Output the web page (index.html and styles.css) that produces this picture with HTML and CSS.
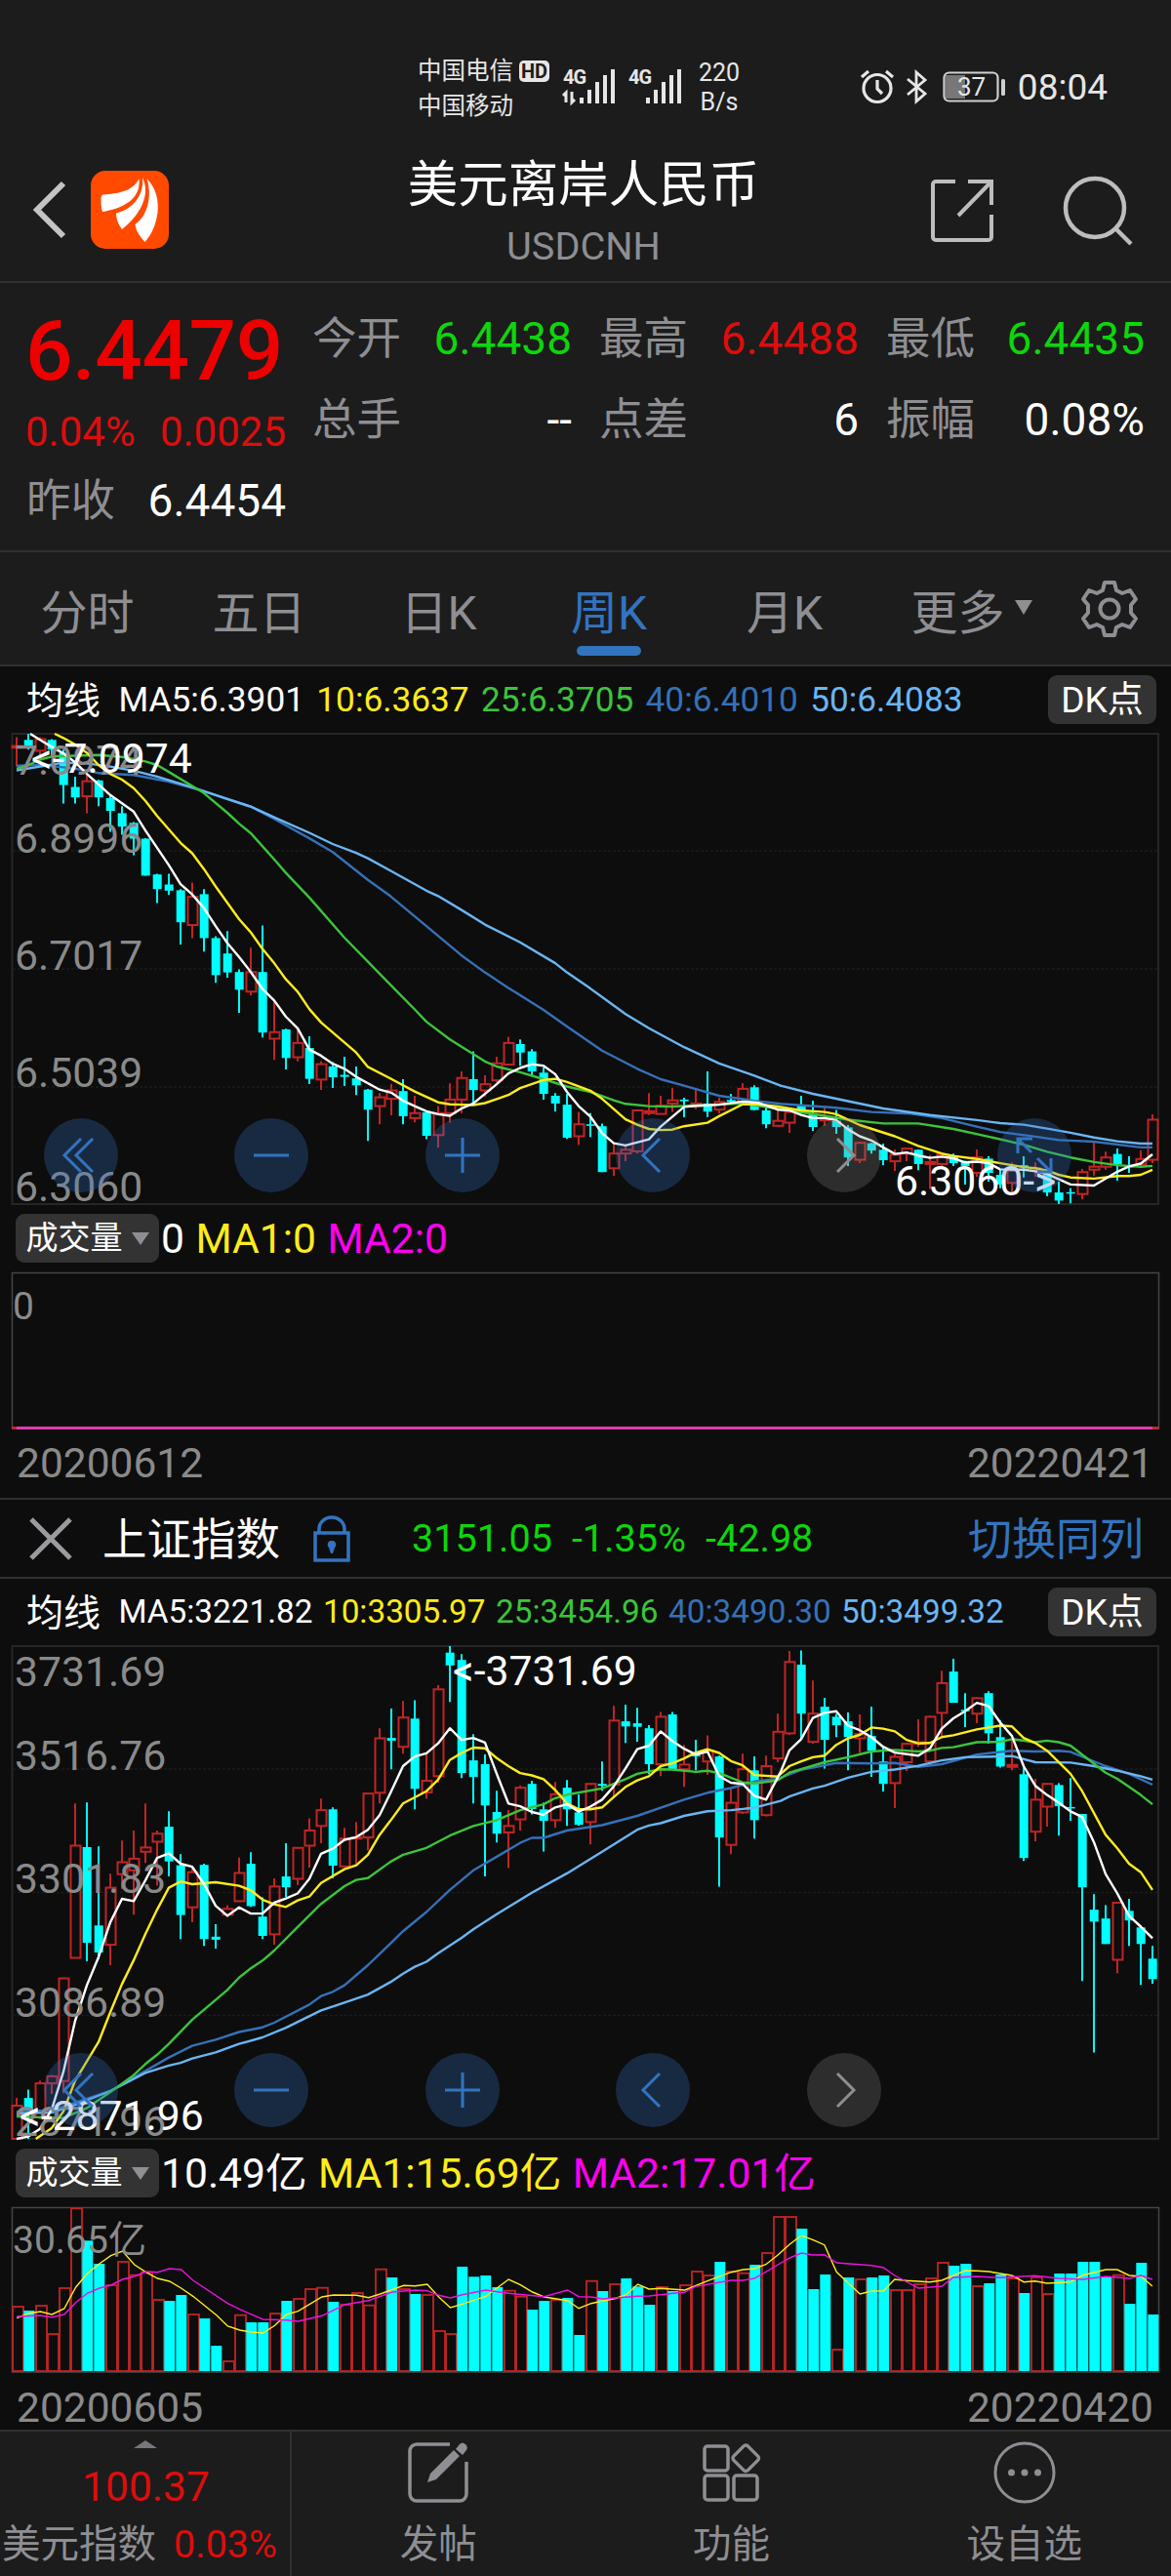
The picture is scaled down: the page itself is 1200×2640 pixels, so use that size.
FILE: index.html
```html
<!DOCTYPE html>
<html lang="zh-CN">
<head>
<meta charset="utf-8">
<title>美元离岸人民币 USDCNH</title>
<link rel="stylesheet" href="styles.css">
</head>
<body>
<header class="top">
  <div class="status">
    <div class="carriers"><span>中国电信<b class="hd">HD</b></span><span>中国移动</span></div>
    <svg class="signals" width="124" height="40" viewBox="0 0 124 40" fill="#e6e6e6">
      <text x="1" y="17" class="net">4G</text>
      <path d="M4 36V26l-3 3M10 25v11l3-3" fill="none" stroke="#e6e6e6" stroke-width="3"/>
      <path d="M18 31h4v6h-4zM26 23h4v14h-4zM34 15h4v22h-4zM42 8h4v29h-4zM50 2h4v35h-4z"/>
      <text x="68" y="17" class="net">4G</text>
      <path d="M86 31h4v6h-4zM94 23h4v14h-4zM102 15h4v22h-4zM110 8h4v29h-4zM118 2h4v35h-4z"/>
    </svg>
    <div class="speed"><span>220</span><span>B/s</span></div>
    <div class="sys">
      <svg width="36" height="38" viewBox="0 0 36 38" fill="none" stroke="#e6e6e6" stroke-width="3.2"><circle cx="18" cy="20.500" r="14"/><path d="M18 12v9l5 5M2 9l7-6M34 9l-7-6"/></svg>
      <svg width="24" height="38" viewBox="0 0 24 38" fill="none" stroke="#e6e6e6" stroke-width="2.800"><path d="M2 11l18 15-9 8V4l9 8L2 27"/></svg>
      <svg width="66" height="34" viewBox="0 0 66 34"><rect x="3" y="5" width="20" height="24" fill="#777"/><rect x="1.500" y="2.500" width="55" height="29" rx="5" fill="none" stroke="#cfcfcf" stroke-width="2.200"/><rect x="60" y="9" width="4" height="17" rx="1.500" fill="#cfcfcf"/><text x="29.500" y="26" text-anchor="middle" class="batt">37</text></svg>
      <span class="clock">08:04</span>
    </div>
  </div>
  <div class="titlebar">
    <svg class="back" width="40" height="64" viewBox="0 0 40 64" fill="none" stroke="#c4c4c4" stroke-width="6"><path d="M35 5L8 32l27 27"/></svg>
    <svg class="logo" width="80" height="80" viewBox="0 0 80 80"><rect width="80" height="80" rx="15" fill="#ff4a00"/><path fill="#fff" d="M49.500 8C43 21 30 23 13 24.500q-2.500.5-2.500 4c0 5 0 9 1.500 13.500C30 39 52 31 49.500 8z"/><path fill="#fff" d="M53 7c2 20-12 33-27 36.500 0 6 2 11 6 16.500C50 46 62 25 53 7z"/><path fill="#fff" d="M57.500 8c6 19 0 39-12 47 1 7 4 11 10 18C68 60 77 28 57.500 8z"/></svg>
    <div class="names"><h1>美元离岸人民币</h1><p>USDCNH</p></div>
    <svg class="share" width="68" height="68" viewBox="0 0 68 68" fill="none" stroke="#bdbdbd" stroke-width="4"><path d="M27 4H7a3 3 0 0 0-3 3v54a3 3 0 0 0 3 3h54a3 3 0 0 0 3-3V38"/><path d="M40 4h24v24M64 4L30 39"/></svg>
    <svg class="search" width="72" height="72" viewBox="0 0 72 72" fill="none" stroke="#bdbdbd" stroke-width="4.500"><circle cx="33" cy="33" r="30"/><path d="M54 54l16 16"/></svg>
  </div>
</header>

<section class="quote">
  <div class="last"><strong>6.4479</strong><p><span>0.04%</span><span>0.0025</span></p></div>
  <dl class="stats">
    <div><dt>今开</dt><dd class="dn">6.4438</dd></div>
    <div><dt>最高</dt><dd class="up">6.4488</dd></div>
    <div><dt>最低</dt><dd class="dn">6.4435</dd></div>
    <div><dt>总手</dt><dd>--</dd></div>
    <div><dt>点差</dt><dd>6</dd></div>
    <div><dt>振幅</dt><dd>0.08%</dd></div>
  </dl>
  <dl class="prev"><dt>昨收</dt><dd>6.4454</dd></dl>
</section>

<nav class="tabs">
  <a>分时</a><a>五日</a><a>日K</a><a class="active">周K</a><a>月K</a><a class="more">更多<i></i></a>
  <a class="gear"><svg width="60" height="60" viewBox="0 0 60 60" fill="none" stroke="#8e8e93" stroke-width="4" stroke-linejoin="round"><path d="M25 3h10l2 8 6 3 8-3 6 9-5 6v8l5 6-6 9-8-3-6 3-2 8H25l-2-8-6-3-8 3-6-9 5-6v-8l-5-6 6-9 8 3 6-3z"/><circle cx="30" cy="30" r="9.500"/></svg></a>
</nav>

<main>
  <div class="ma ma-fx"><b>均线</b><span class="c5">MA5:6.3901</span><span class="c10">10:6.3637</span><span class="c25">25:6.3705</span><span class="c40">40:6.4010</span><span class="c50">50:6.4083</span><button>DK点</button></div>
  <svg id="fx" class="chart" width="1200" height="484"></svg>
  <div class="vol-head"><button>成交量<i></i></button><span class="c5">0</span><span class="c10">MA1:0</span><span class="cm">MA2:0</span></div>
  <svg class="chart" width="1200" height="162" viewBox="0 0 1200 162"><path d="M12.500 161V1.500h1175V161" class="vframe"/><path d="M12 160.500h1176" stroke="#b92b2b" stroke-width="3"/><path d="M17 160.500h1164" stroke="#e23ab0" stroke-width="3"/><text x="13" y="49" class="vlabel">0</text></svg>
  <div class="dates"><span>20200612</span><span>20220421</span></div>

  <div class="index">
    <svg width="44" height="44" viewBox="0 0 44 44" stroke="#9a9a9f" stroke-width="5"><path d="M2 2l40 40M42 2L2 42"/></svg>
    <h2>上证指数</h2>
    <svg class="lock" width="38" height="48" viewBox="0 0 38 48" fill="none" stroke="#3274c0" stroke-width="3.500"><path d="M2 18h34v28H2zM6 18v-4a13 12 0 0 1 26 0v4"/><path d="M19 26a4 4 0 0 1 3 7l-2 6h-2l-2-6a4 4 0 0 1 3-7z" fill="#3274c0" stroke="none"/></svg>
    <p class="dn"><span>3151.05</span><span>-1.35%</span><span>-42.98</span></p>
    <a>切换同列</a>
  </div>

  <div class="ma ma-sh"><b>均线</b><span class="c5">MA5:3221.82</span><span class="c10">10:3305.97</span><span class="c25">25:3454.96</span><span class="c40">40:3490.30</span><span class="c50">50:3499.32</span><button>DK点</button></div>
  <svg id="sh" class="chart" width="1200" height="507"></svg>
  <div class="vol-head"><button>成交量<i></i></button><span class="c5">10.49亿</span><span class="c10">MA1:15.69亿</span><span class="cm">MA2:17.01亿</span></div>
  <svg id="shvol" class="chart" width="1200" height="171"></svg>
  <div class="dates short"><span>20200605</span><span>20220420</span></div>
</main>

<footer class="bottom">
  <div class="dxy"><i></i><strong>100.37</strong><p><span>美元指数</span><em>0.03%</em></p></div>
  <a><svg width="64" height="64" viewBox="0 0 64 64" fill="none" stroke="#8e8e93" stroke-width="3.500"><path d="M44 3H10a7 7 0 0 0-7 7v44a7 7 0 0 0 7 7h44a7 7 0 0 0 7-7V21"/><path d="M21 42l3-9 24-24 6 6-24 24z" fill="#8e8e93" stroke="none"/><path d="M50 8l4-5q3-3 6 0t1 6l-4 5z" fill="#8e8e93" stroke="none"/></svg><span>发帖</span></a>
  <a><svg width="64" height="64" viewBox="0 0 64 64" fill="none" stroke="#8e8e93" stroke-width="3.500"><rect x="5" y="5" width="24" height="25" rx="3"/><rect x="5" y="35" width="24" height="25" rx="3"/><rect x="35" y="35" width="24" height="25" rx="3"/><rect x="37" y="7" width="20.500" height="20.500" rx="3" transform="rotate(45 47.250 17.250)"/></svg><span>功能</span></a>
  <a><svg width="64" height="64" viewBox="0 0 64 64" fill="none" stroke="#8e8e93" stroke-width="3"><circle cx="32" cy="32" r="30"/><g fill="#8e8e93" stroke="none"><circle cx="18.500" cy="32" r="3.500"/><circle cx="32" cy="32" r="3.500"/><circle cx="45.500" cy="32" r="3.500"/></g></svg><span>设自选</span></a>
</footer>
<script src="charts.js"></script>
</body>
</html>
```
FILE: styles.css
```css
* { box-sizing: border-box; margin: 0; padding: 0; }
body {
  width: 1200px; height: 2640px; overflow: hidden;
  display: flex; flex-direction: column;
  background: #0d0d0d; color: #fff;
  font-family: Roboto, "Noto Sans CJK SC", sans-serif;
}
svg { display: block; flex: none; overflow: visible; }
i, em { font-style: normal; }
button { border: 0; font: inherit; color: inherit; background: #333; border-radius: 9px; }
.up { color: #dd0d0d; }
.dn, .stats .dn { color: #0cd60c; }
.c5 { color: #fff; } .c10 { color: #ffec1c; } .c25 { color: #3cc43c; }
.c40 { color: #3571b8; } .c50 { color: #6ab6f5; } .cm { color: #ff00f0; }

.top { height: 290px; background: #1c1c1c; border-bottom: 2px solid #303032; flex: none; }
.status { height: 142px; padding: 55px 65px 0 428px; display: flex; color: #e6e6e6; }
.carriers { display: flex; flex-direction: column; font-size: 24.5px; width: 148px; }
.carriers span { display: flex; align-items: center; height: 36px; line-height: 36px; }
.hd { background: #e6e6e6; color: #1c1c1c; font-size: 20px; line-height: 22px; border-radius: 5px; padding: 0 2px; margin-left: 6px; }
.signals { margin-top: 14px; }
.net { font-size: 20px; font-weight: 700; letter-spacing: -1px; }
.speed { margin-left: 11px; width: 52px; text-align: center; display: flex; flex-direction: column; font-size: 25px; line-height: 30px; margin-top: 5px; }
.sys { margin-left: auto; display: flex; align-items: center; height: 68px; gap: 11px; }
.sys svg:nth-child(2) { margin-right: 3px; }
.batt { font-size: 26px; fill: #e6e6e6; }
.clock { font-size: 37px; }
.titlebar { display: flex; align-items: flex-start; padding-left: 30px; }
.back { margin-top: 41px; }
.logo { margin: 33px 0 0 23px; }
.names { width: 600px; margin-left: 125px; text-align: center; }
.names h1 { font-size: 51.500px; font-weight: 400; line-height: 76px; margin-top: 10px; }
.names p { font-size: 39.700px; line-height: 46px; color: #8e8e93; margin-top: 2px; }
.share { margin: 40px 0 0 54px; }
.search { margin: 38px 0 0 69px; }

.quote { height: 276px; flex: none; background: #1c1c1c; border-bottom: 2px solid #303032; display: grid; grid-template-columns: 293px 853px; grid-template-rows: 181px 83px; column-gap: 27px; }
.last { padding: 23px 0 0 26px; color: #ee0000; }
.last strong { display: block; font-weight: 500; font-size: 85.500px; line-height: 94px; letter-spacing: -.5px; }
.last p { display: flex; justify-content: space-between; font-size: 42px; line-height: 50px; margin-top: 11px; color: #dd0d0d; }
.stats { display: grid; grid-template-columns: 266px 266px 265px; column-gap: 28px; grid-auto-rows: 83px; padding-top: 15px; }
.stats div, .prev { display: flex; justify-content: space-between; align-items: center; }
dt { color: #8e8e93; font-size: 45.500px; line-height: 56px; margin-top: 3px; }
dd { font-size: 46px; line-height: 56px; }
.prev { padding-left: 27px; }

.tabs { height: 117px; flex: none; background: #1c1c1c; border-bottom: 2px solid #303032; display: flex; color: #8e8e93; font-size: 48px; }
.tabs a { width: 179px; display: flex; justify-content: center; align-items: center; height: 116px; }
.tabs a:nth-child(2) { width: 173px; }
.tabs a:nth-child(3) { width: 195px; }
.tabs a:nth-child(5) { width: 206px; }
.tabs .active { color: #3274c0; position: relative; width: 154px; }
.tabs .active::after { content: ""; position: absolute; left: 44px; top: 96px; width: 66px; height: 10px; border-radius: 5px; background: #3274c0; }
.tabs .more { width: 177px; }
.tabs .more i { border: 9px solid transparent; border-top: 15px solid #8e8e93; border-bottom: 0; margin: 0 0 4px 10px; }
.tabs .gear { width: 105px; }

main { display: block; flex: none; }
.ma { height: 68px; display: flex; align-items: center; padding: 0 15px 0 27px; line-height: 50px; }
.ma b { font-size: 38px; font-weight: 400; width: 94.500px; padding-top: 1px; }
.ma-fx { font-size: 35.200px; } .ma-fx span { margin-right: 12.400px; }
.ma-sh { font-size: 33.300px; } .ma-sh span { margin-right: 10.500px; }
.ma button { margin-left: auto; width: 111px; height: 50px; font-size: 37px; line-height: 51px; }
.vol-head { height: 68px; display: flex; align-items: center; padding-left: 16px; font-size: 42.600px; line-height: 50px; }
.vol-head button { width: 147px; height: 50px; font-size: 33px; line-height: 52px; display: flex; align-items: center; justify-content: center; margin-right: 2px; }
.vol-head button i { border: 9px solid transparent; border-top: 13px solid #8e8e93; border-bottom: 0; margin-left: 9px; }
.vol-head span { margin-right: 11.500px; }
.chart text { font-size: 42.700px; }
.axis { fill: #8a8a8a; }
.mark { fill: #fff; }
.chart .vlabel { font-size: 39px; fill: #8a8a8a; }
.vframe { fill: none; stroke: #454545; stroke-width: 1.500; }
.dates { height: 70px; line-height: 69px; display: flex; justify-content: space-between; padding: 0 18px 0 17px; font-size: 42.500px; color: #8a8a8a; }
.dates.short { height: 58px; line-height: 71px; }
.index { height: 83px; border-top: 2px solid #303032; border-bottom: 2px solid #303032; display: flex; align-items: center; padding: 0 28px 0 30px; line-height: 56px; }
.index h2 { font-size: 45.500px; font-weight: 400; margin: 4px 0 0 31px; }
.index .lock { margin-left: 34px; }
.index p { display: flex; gap: 20px; font-size: 39.600px; margin: 1px 0 0 63px; }
.index a { margin: 4px 0 0 auto; font-size: 45px; color: #3274c0; }

.bottom { height: 150px; flex: none; display: flex; background: #1c1c1c; border-top: 2px solid #303032; }
.bottom > a { flex: 1; display: flex; flex-direction: column; align-items: center; font-size: 39.500px; line-height: 60px; color: #8e8e93; padding-top: 10px; }
.bottom > a span { margin-top: 12px; }
.dxy { width: 299px; border-right: 2px solid #303032; display: flex; flex-direction: column; align-items: center; }
.dxy i { border: 12px solid transparent; border-bottom: 8px solid #77777b; border-top: 0; margin-top: 9px; }
.dxy strong { font-size: 42.500px; font-weight: 400; color: #dd0d0d; line-height: 50px; margin: 15px 0 0 2px; }
.dxy p { display: flex; justify-content: space-between; align-items: center; align-self: stretch; padding: 0 13px 0 2px; font-size: 39.500px; line-height: 60px; color: #8e8e93; margin-top: 4px; white-space: nowrap; }
.dxy em { color: #dd0d0d; }
```
FILE: charts.js
```js
const RED = '#c22424', CYAN = '#00ffff';
const COLORS = ['#3571b8', '#6ab6f5', '#3cc43c', '#ffec1c', '#ffffff'];

// Each candle: direction, high, body top, body bottom, low (on the series' own grid).
const fx = {
  id: 'fx', top: 181, bottom: 1401, y0: 1, h: 482, grid: [121, 242, 363],
  candles: `u190,213,217,266 d181,197,211,222 u190,195,225,240 d195,197,222,240 d222,230,314,362 d292,319,346,362 u280,304,343,387 d300,302,346,369 d343,348,381,435 d369,387,422,443 d410,412,453,496 d452,453,549,549 d544,546,584,620 d544,572,588,599 d584,587,670,728 u567,604,677,711 d584,597,711,746 d706,711,807,827 d693,751,800,814 d792,799,845,905 u736,799,850,860 d678,799,956,969 u870,955,972,1027 d946,948,1022,1052 u948,983,1020,1031 d966,996,1076,1090 u1030,1038,1078,1105 d1033,1044,1072,1100 d1019,1066,1071,1095 d1044,1075,1093,1118 d1102,1104,1156,1237 u1113,1124,1147,1194 u1090,1106,1128,1171 d1077,1108,1173,1194 u1120,1165,1178,1189 d1162,1163,1224,1233 u1147,1165,1222,1254 u1088,1130,1165,1190 u1057,1074,1130,1165 d1005,1077,1105,1140 u1067,1090,1106,1122 u1019,1036,1080,1085 u967,983,1039,1039 d974,986,1008,1042 d999,1005,1057,1067 d1047,1060,1115,1130 d1113,1120,1140,1161 d1115,1143,1229,1232 u1162,1194,1225,1248 d1165,1194,1198,1227 d1192,1199,1318,1318 u1243,1270,1308,1328 u1250,1260,1270,1290 u1158,1158,1264,1270 u1113,1160,1165,1170 u1120,1146,1167,1167 u1100,1132,1140,1162 d1125,1130,1134,1176 u1105,1140,1147,1155 d1057,1140,1161,1175 u1125,1136,1156,1166 d1115,1131,1136,1140 u1087,1102,1135,1138 d1093,1098,1157,1158 d1150,1158,1194,1204 u1150,1185,1198,1200 u1160,1162,1190,1216 d1120,1145,1160,1165 d1133,1165,1201,1211 u1150,1180,1184,1198 d1157,1185,1201,1219 d1196,1202,1280,1302 u1240,1242,1286,1295 d1242,1243,1262,1270 d1244,1260,1287,1300 u1259,1273,1290,1315 u1255,1257,1270,1290 d1259,1260,1297,1313 u1274,1292,1297,1362 u1268,1272,1297,1302 d1270,1278,1295,1302 d1288,1290,1302,1350 u1259,1280,1320,1330 d1277,1283,1320,1343 d1310,1325,1350,1360 u1293,1315,1346,1370 d1277,1300,1305,1332 u1293,1308,1314,1330 d1310,1318,1371,1381 d1343,1371,1392,1401 d1360,1370,1374,1399 u1310,1318,1375,1388 u1241,1304,1312,1327 u1265,1280,1304,1312 d1257,1271,1298,1340 d1277,1302,1306,1320 u1262,1284,1298,1305 u1168,1182,1286,1295`,
  lines: [
    '51,264 123,262 195,268 267,276 303,283 411,288 519,305 627,330 771,370 843,402 951,452 1023,488 1131,560 1200,602 1311,680 1419,756 1491,800 1563,840 1671,897 1743,940 1851,1003 1959,1050 2031,1077 2103,1094 2211,1120 2319,1133 2400,1141 2571,1151 2679,1162 2800,1166 2895,1178 3003,1200 3075,1214 3183,1226 3255,1235 3363,1239 3507,1254 3543,1254',
    '51,276 123,266 195,256 267,258 339,266 411,277 483,292 591,320 699,350 771,370 843,398 951,438 1023,467 1095,490 1131,504 1200,536 1311,588 1347,602 1419,638 1491,676 1599,722 1707,776 1743,800 1815,842 1923,908 1995,945 2103,994 2211,1036 2319,1068 2400,1094 2499,1115 2607,1134 2715,1153 2859,1170 3003,1183 3075,1191 3147,1195 3219,1205 3291,1216 3363,1228 3435,1238 3507,1244 3543,1244',
    '51,272 87,262 123,248 159,240 231,238 303,236 375,241 447,253 483,262 519,280 627,335 699,386 735,414 771,439 843,507 879,542 951,606 1059,710 1200,832 1275,896 1311,928 1383,974 1455,1012 1491,1031 1527,1044 1599,1059 1671,1077 1743,1096 1815,1110 1887,1132 1923,1141 1995,1147 2067,1148 2283,1140 2427,1158 2535,1172 2607,1182 2715,1192 2823,1192 2931,1206 3039,1226 3147,1247 3219,1265 3291,1280 3363,1292 3435,1300 3507,1304 3543,1302',
    '168,181 195,192 231,209 267,230 303,262 339,285 375,300 411,322 447,355 483,394 555,464 591,491 627,532 663,577 735,662 771,696 807,739 843,776 879,818 915,850 951,895 987,930 1095,1008 1131,1045 1200,1075 1275,1109 1347,1137 1383,1142 1419,1143 1455,1144 1491,1139 1563,1118 1599,1100 1671,1079 1707,1076 1743,1084 1815,1107 1851,1128 1923,1181 1959,1195 1995,1206 2031,1209 2067,1208 2103,1199 2175,1190 2211,1173 2283,1142 2331,1142 2391,1148 2463,1158 2535,1162 2571,1168 2643,1196 2751,1225 2823,1250 2895,1270 2931,1276 3003,1284 3075,1295 3147,1305 3183,1308 3219,1314 3255,1325 3291,1332 3363,1335 3435,1328 3471,1328 3507,1325 3543,1312',
    '93,181 123,197 159,215 195,232 231,255 267,285 303,312 339,340 411,383 447,432 519,522 555,571 591,598 627,633 663,680 699,724 735,760 771,799 807,843 843,873 879,915 915,945 951,1000 987,1016 1023,1037 1059,1050 1095,1071 1167,1104 1203,1112 1239,1133 1275,1147 1311,1160 1347,1168 1383,1172 1419,1153 1455,1140 1527,1090 1563,1062 1599,1048 1635,1038 1671,1042 1707,1064 1743,1110 1779,1147 1815,1174 1851,1217 1887,1243 1923,1249 1995,1233 2031,1200 2103,1149 2140,1146 2211,1143 2283,1135 2331,1138 2391,1156 2427,1158 2463,1170 2499,1178 2535,1178 2571,1183 2607,1207 2643,1225 2679,1236 2715,1254 2751,1271 2787,1267 2823,1275 2859,1281 2895,1278 2931,1282 2967,1293 3003,1291 3039,1295 3075,1311 3147,1312 3183,1316 3219,1323 3291,1350 3363,1353 3435,1317 3471,1303 3507,1296 3543,1272'
  ],
  axis: [['7.0974', 43], ['6.8996', 123], ['6.7017', 243], ['6.5039', 363], ['6.3060', 480]],
  marks: [['&lt;-7.0974', 32, 41], ['6.3060-&gt;', 917, 474]],
  buttonsY: 433, expand: true
};

const sh = {
  id: 'sh', top: 169, bottom: 1446, y0: 1, h: 505, grid: [127, 253.5, 379.5],
  candles: `u1340,1360,1446,1446 d1318,1340,1372,1446 u1295,1302,1390,1395 u1280,1284,1302,1330 u1030,1030,1296,1328 u577,686,977,977 d574,690,938,986 d688,893,963,980 u759,795,943,996 u673,729,760,798 u647,720,750,865 u577,691,702,731 u647,655,676,790 d597,637,727,766 d708,737,866,928 u740,755,846,885 d733,736,928,946 d890,922,930,953 u840,850,865,870 u717,757,830,830 d703,733,843,845 d820,870,920,928 u771,792,916,943 d680,766,794,819 u692,692,772,788 u615,647,686,743 u564,594,635,680 d587,592,738,771 u640,668,740,742 u625,665,668,735 u551,551,665,698 u382,408,549,577 d331,407,414,488 u311,354,430,448 d309,357,539,592 u450,518,548,564 u270,281,506,523 d169,186,219,314 d190,205,498,511 d397,465,508,577 d450,475,582,766 d544,599,655,678 u594,635,652,744 u530,536,618,647 d518,526,591,605 d575,592,622,701 u521,553,620,640 d516,536,592,635 d553,600,632,634 u525,526,625,683 d468,526,531,544 u324,362,528,560 d321,364,377,420 d329,369,378,417 d374,382,475,501 u340,352,475,506 d340,346,488,490 u425,476,488,534 d412,450,455,491 u400,441,468,503 d453,455,665,792 u540,575,684,708 u448,488,600,604 d455,491,620,668 u453,480,607,610 u344,391,460,470 u182,210,395,399 d180,217,344,410 u258,344,417,422 d303,326,412,486 d345,352,374,405 d341,364,405,491 u346,397,408,446 d326,402,440,508 d430,468,526,546 u448,456,524,589 u420,422,470,493 u359,418,422,430 u349,352,468,468 u233,265,342,402 d202,235,316,316 d291,334,336,379 u301,304,344,369 d286,291,395,422 d362,405,481,484 u410,477,482,491 d480,501,718,726 u513,567,650,675 u524,526,585,637 d524,529,584,660 d511,586,589,622 d604,604,794,1037 d812,852,883,1222 d840,875,941,941 u832,834,982,1017 d824,855,880,946 d895,898,941,1047 d946,979,1032,1044`,
  lines: [
    '51,1376 159,1372 231,1352 339,1322 447,1270 519,1235 591,1205 663,1189 735,1169 807,1157 843,1145 951,1098 987,1076 1023,1065 1059,1048 1131,996 1200,940 1239,908 1311,858 1383,801 1455,750 1527,715 1599,679 1635,666 1671,666 1743,647 1851,633 1959,609 2103,567 2175,549 2247,537 2319,520 2391,513 2463,490 2571,472 2679,473 2751,472 2823,482 2895,475 3003,450 3111,440 3183,442 3255,440 3291,443 3399,480 3471,500 3543,528',
    '51,1380 159,1378 231,1358 339,1322 447,1275 519,1256 555,1249 591,1238 663,1222 735,1200 807,1183 879,1158 987,1113 1059,1093 1131,1072 1200,1040 1239,1018 1275,1000 1311,987 1347,965 1419,925 1455,903 1527,864 1635,808 1743,758 1851,702 1959,645 1995,634 2031,628 2103,609 2175,597 2247,594 2319,588 2400,570 2427,559 2499,538 2535,531 2607,510 2679,495 2751,489 2823,479 2895,465 2967,457 3111,454 3183,470 3291,471 3363,480 3435,492 3507,506 3543,515',
    '51,1388 123,1390 195,1392 267,1366 339,1325 411,1281 447,1252 483,1228 519,1200 591,1137 699,1060 735,1028 771,1004 807,984 843,958 915,897 987,837 1059,791 1095,775 1131,770 1200,728 1239,710 1311,692 1383,660 1455,635 1527,620 1599,594 1671,579 1707,563 1743,554 1851,538 1923,514 1959,500 2031,488 2067,489 2139,495 2175,492 2211,498 2283,522 2319,525 2391,517 2427,497 2535,470 2607,457 2679,442 2751,438 2823,442 2859,440 2895,433 2931,431 3003,418 3075,417 3111,410 3183,418 3219,414 3255,418 3291,427 3399,497 3435,513 3507,555 3543,579',
    '110,1446 159,1418 195,1375 231,1295 303,1195 339,1118 375,1045 411,983 447,915 483,852 519,795 555,779 591,786 663,781 735,790 771,802 807,826 843,838 879,845 915,828 951,818 987,783 1059,747 1095,737 1131,710 1167,658 1200,622 1239,577 1311,545 1347,515 1383,464 1419,446 1455,432 1491,434 1527,459 1563,480 1599,498 1635,504 1671,514 1707,542 1743,576 1779,592 1815,592 1851,587 1887,560 1923,534 1959,517 1995,506 2031,480 2067,473 2103,460 2139,445 2175,436 2211,446 2247,467 2283,478 2319,503 2391,507 2427,480 2463,468 2499,457 2535,453 2571,425 2607,408 2643,399 2679,380 2715,383 2751,390 2787,412 2823,421 2859,420 2895,405 2931,400 3003,385 3075,375 3111,377 3147,407 3183,420 3219,440 3291,500 3327,545 3399,658 3435,693 3471,733 3507,755 3543,801',
    '51,1446 87,1440 123,1420 159,1370 195,1272 231,1140 267,1048 303,975 339,885 375,824 411,830 447,776 483,718 519,706 555,733 591,741 627,785 663,842 699,868 735,846 771,862 807,862 843,834 879,823 915,810 951,772 987,707 1023,694 1059,671 1095,664 1131,645 1167,607 1200,550 1239,480 1275,455 1311,447 1347,421 1383,382 1419,412 1455,407 1491,419 1527,500 1563,577 1599,584 1635,599 1671,606 1707,587 1743,579 1779,598 1815,585 1851,567 1887,532 1923,486 1959,436 1995,427 2031,390 2067,415 2103,435 2139,450 2175,442 2211,506 2247,523 2283,526 2319,557 2355,567 2400,495 2427,439 2463,410 2499,355 2535,342 2571,338 2607,375 2643,387 2679,405 2715,430 2751,445 2823,453 2859,434 2895,383 2931,356 2967,338 3003,316 3039,324 3075,367 3111,402 3147,480 3183,531 3219,555 3255,575 3291,597 3327,612 3363,677 3399,760 3435,810 3471,868 3507,896 3543,926'
  ],
  axis: [['3731.69', 42], ['3516.76', 127.500], ['3301.83', 253.500], ['3086.89', 381], ['2871.96', 503]],
  marks: [['&lt;-3731.69', 464, 40.500], ['&lt;-2871.96', 20, 497]],
  buttonsY: 456
};

function drawCandles(c) {
  const Y = v => +(c.y0 + (v - c.top) * c.h / (c.bottom - c.top)).toFixed(1);
  let s = `<path d="M12.500 ${c.y0}h1174.500v${c.h}H12.500z" fill="none" stroke="#262626" stroke-width="2"/>`;
  for (const g of c.grid) s += `<path d="M13 ${g}H1187" stroke="#1b1b1b" stroke-width="1.500" stroke-dasharray="3 2"/>`;
  c.candles.split(' ').forEach((t, i) => {
    const [hi, a, b, lo] = t.slice(1).split(',').map(v => Y(+v));
    const x = 17 + 12 * i;
    if (t[0] === 'd') {
      s += `<path d="M${x} ${hi}V${lo}" stroke="${CYAN}" stroke-width="2"/><rect x="${x - 4.300}" y="${a}" width="9" height="${Math.max(b - a, 1.500)}" fill="${CYAN}"/>`;
    } else {
      s += `<path d="M${x} ${hi}V${a}M${x} ${b}V${lo}" stroke="${RED}" stroke-width="2"/><rect x="${x - 4.500}" y="${a}" width="10" height="${Math.max(b - a, 1)}" fill="none" stroke="${RED}" stroke-width="2"/>`;
    }
  });
  c.lines.forEach((l, i) => {
    const pts = l.split(' ').map(p => { const [x, y] = p.split(',').map(Number); return (x / 3).toFixed(1) + ',' + Y(y); });
    s += `<polyline points="${pts.join(' ')}" fill="none" stroke="${COLORS[i]}" stroke-width="2.400" stroke-linejoin="round"/>`;
  });
  for (const [t, y] of c.axis) s += `<text x="15" y="${y}" class="axis">${t}</text>`;
  for (const [t, x, y] of c.marks) s += `<text x="${x}" y="${y}" class="mark">${t}</text>`;
  const icons = ['M0-17L-17 0 0 17M12-17L-5 0 12 17', 'M-18 0H18', 'M-18 0H18M0-18V18', 'M7-17L-10 0 7 17', 'M-7-17L10 0-7 17'];
  if (c.expand) icons.push('M-17-2V-17H-2M-17-17L-3-3M17 3V17H3M17 17L3 3');
  icons.forEach((d, i) => {
    const grey = i === 4;
    s += `<g transform="translate(${[83, 278, 474, 669, 865, 1060][i]} ${c.buttonsY})"><circle r="38" fill="${grey ? '#808080' : '#3578cc'}" fill-opacity=".28"/><path d="${d}" fill="none" stroke="${grey ? '#8e8e93' : '#3274c0'}" stroke-width="3"/></g>`;
  });
  document.getElementById(c.id).innerHTML = s;
}
drawCandles(fx);
drawCandles(sh);

// Turnover bars: direction and top edge in thirds of a pixel.
const volume = 'u489 d504 u486 u573 u432 u187 d289 d360 u423 u351 u392 u383 u468 d474 d456 u513 d528 d612 u657 u515 d540 d540 u510 d474 u465 u435 u431 d477 u483 u447 u485 u374 d402 u435 d453 u453 u564 u573 d369 d400 d396 d432 u440 u458 d501 d474 u468 d465 d579 u410 d444 u420 d405 d430 d486 u429 d444 u423 u381 u393 d354 u381 u386 d363 u324 u213 u213 d252 d438 d393 u621 d402 u405 d402 d396 u438 u438 u420 u402 u354 d366 d360 u426 d420 d393 u402 d450 u399 u450 d390 d390 d354 d354 d402 u392 d483 d357 d516';
const volMa = [
  ['#ffec1c', '45,527 76,513 108,507 139,516 172,498 203,432 234,390 266,360 297,335 328,321 360,363 391,386 422,405 454,414 485,435 517,460 580,518 610,552 642,564 673,570 704,573 736,550 767,516 798,506 862,462 893,456 955,457 987,464 1018,453 1081,427 1112,428 1144,423 1175,462 1206,495 1238,484 1301,460 1362,408 1394,425 1426,447 1457,462 1520,473 1550,497 1583,482 1615,474 1646,467 1677,455 1708,423 1738,438 1770,436 1834,441 1896,412 1958,386 1990,378 2020,375 2051,362 2083,333 2115,300 2146,273 2178,287 2208,302 2240,385 2272,420 2303,453 2334,444 2366,443 2396,408 2428,412 2490,416 2522,411 2585,381 2616,382 2648,384 2710,396 2742,416 2772,413 2804,420 2866,416 2900,395 2961,378 2992,378 3024,396 3055,398 3086,429'],
  ['#e812e0', '45,522 108,519 139,524 172,516 203,479 234,451 266,435 297,426 328,408 360,399 391,384 422,386 454,375 485,378 517,411 610,482 642,500 704,531 767,533 798,537 862,520 925,485 987,473 1050,447 1112,441 1144,443 1175,457 1206,465 1238,455 1301,441 1362,451 1457,461 1520,441 1550,461 1583,462 1615,468 1708,460 1738,459 1834,447 1862,430 1958,411 1990,411 2020,405 2051,385 2083,363 2115,342 2146,327 2178,333 2208,332 2240,357 2334,365 2366,372 2396,396 2460,435 2522,429 2553,402 2616,399 2678,403 2772,397 2835,405 2900,408 2961,399 3024,405 3055,396 3086,408']
];
let s = '<path d="M12.500 1.500h1175V170H12.500z" class="vframe"/>';
volume.split(' ').forEach((t, i) => {
  const x = 12 + 12 * i, y = +t.slice(1) / 3 - 61;
  s += t[0] === 'd'
    ? `<rect x="${x + .3}" y="${y.toFixed(1)}" width="11" height="${(169 - y).toFixed(1)}" fill="${CYAN}"/>`
    : `<rect x="${x + 1}" y="${(y + 1).toFixed(1)}" width="11" height="${(168 - y).toFixed(1)}" fill="none" stroke="${RED}" stroke-width="1.800"/>`;
});
for (const [color, l] of volMa) {
  const pts = l.split(' ').map(p => { const [x, y] = p.split(',').map(Number); return (x / 2.6133).toFixed(1) + ',' + (y / 3 - 61).toFixed(1); });
  s += `<polyline points="${pts.join(' ')}" fill="none" stroke="${color}" stroke-width="1.400"/>`;
}
s += '<text x="13" y="48" class="vlabel">30.65亿</text>';
document.getElementById('shvol').innerHTML = s;
```
